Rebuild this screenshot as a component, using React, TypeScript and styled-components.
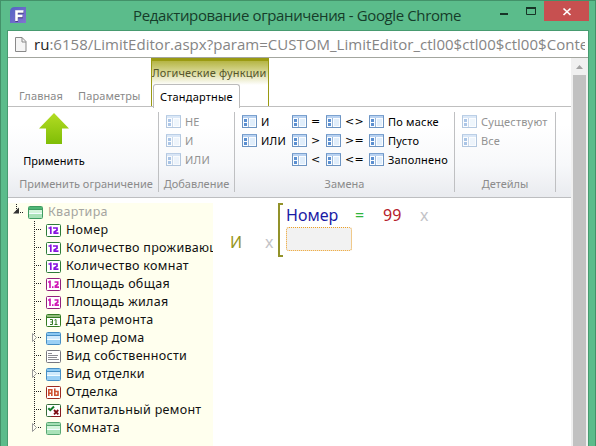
import React from "react";
import styled, { createGlobalStyle } from "styled-components";

const GlobalStyle = createGlobalStyle`
  *, *::before, *::after { box-sizing: border-box; }
  html, body { margin: 0; height: 100%; overflow: hidden; }
  #root { height: 100%; }
  body { font-family: "Noto Sans", "Open Sans", sans-serif; background: #fff; }
`;

const Window = styled.div`
  height: 446px;
  width: 596px;
  display: flex;
  flex-direction: column;
  background: #5bbc8b;
  border: 1px solid #439169;
  border-bottom: 0;
  overflow: hidden;
  white-space: nowrap;
`;

const TitleBar = styled.header`
  height: 29px;
  flex: none;
  display: flex;
  padding-right: 6px;
`;

const AppIcon = styled.svg`
  margin: 6px 0 0 9px;
  flex: none;
`;

const Title = styled.h1`
  margin: 0;
  padding-left: 107px;
  flex: 1;
  font: 400 15px/28px "Open Sans", sans-serif;
  letter-spacing: -0.38px;
  color: #163c2a;
`;

const WindowButton = styled.button<{ $w: number; $close?: boolean }>`
  display: block;
  padding: 0;
  border: 0;
  width: ${(p) => p.$w}px;
  height: 20px;
  background: ${(p) => (p.$close ? "#c75050" : "transparent")};
  svg { display: block; }
`;

const Client = styled.div`
  flex: 1;
  min-height: 0;
  margin: 0 6px;
  border: 1px solid #479b70;
  border-bottom: 0;
  background: #fff;
  display: flex;
  flex-direction: column;
`;

const AddressBar = styled.div`
  height: 27px;
  flex: none;
  display: flex;
  border-bottom: 1px solid #a3a69f;
  padding: 0 3px 0 7px;
  svg { flex: none; margin-top: 6px; }
`;

const Url = styled.div`
  margin-left: 7px;
  overflow: hidden;
  font: 400 15px/27px "Open Sans", sans-serif;
  letter-spacing: 0.03px;
  color: #858585;
  span { color: #222; }
`;

const Body = styled.div`
  flex: 1;
  min-height: 0;
  display: flex;
`;

const Page = styled.main`
  flex: 1;
  min-width: 0;
`;

const ScrollBar = styled.div`
  width: 17px;
  background: #f0f0f0;
  display: flex;
  flex-direction: column;
  padding: 0 2px;
`;

const ScrollUp = styled.svg`
  display: block;
  flex: none;
`;

const Thumb = styled.div`
  flex: 1;
  background: #c1c1c1;
`;

const TabStrip = styled.nav`
  height: 49px;
  display: flex;
  align-items: flex-end;
  border-bottom: 1px solid #bfbfbf;
`;

const Tab = styled.div<{ $pad: number; $w: number }>`
  width: ${(p) => p.$w}px;
  padding-left: ${(p) => p.$pad}px;
  font-size: 11px;
  line-height: 20px;
  letter-spacing: 0.1px;
  color: #8a8a8a;
`;

const ContextTabs = styled.div`
  width: 118px;
  height: 48px;
  border: solid #9a9a12;
  border-width: 3px 1px 0;
  background: linear-gradient(#b5b544 0, #d5d58e 10px, #fff 24px);
  display: flex;
  flex-direction: column;
  justify-content: space-between;
`;

const ContextTitle = styled.div`
  font-size: 11px;
  line-height: 23px;
  letter-spacing: 0.15px;
  color: #55552c;
`;

const ActiveTab = styled.div`
  width: 87px;
  height: 24px;
  flex: none;
  margin: 0 0 -1px 1px;
  border: 1px solid #bcbcbc;
  border-bottom: 0;
  border-radius: 3px 3px 0 0;
  background: #fff;
  padding-left: 6px;
  font-size: 11px;
  line-height: 23px;
  letter-spacing: 0.2px;
  color: #000;
`;

const Ribbon = styled.section`
  height: 91px;
  display: flex;
  padding-top: 5px;
  border-bottom: 1px solid #bdbec0;
  background: linear-gradient(#fff 20%, #f7f8fa 65%, #e9ebef);
`;

const Group = styled.div<{ $w: number }>`
  width: ${(p) => p.$w}px;
  height: 80px;
  flex: none;
  border-right: 1px solid #bfc0c2;
  display: flex;
  flex-direction: column;
`;

const GroupItems = styled.div<{ $pad: number }>`
  flex: 1;
  display: flex;
  padding-left: ${(p) => p.$pad}px;
`;

const GroupTitle = styled.div<{ $indent?: number }>`
  height: 16px;
  margin-bottom: -4px;
  padding-left: ${(p) => p.$indent ?? 0}px;
  transform: translateY(-4px);
  text-align: center;
  font-size: 11px;
  line-height: 16px;
  letter-spacing: 0;
  color: #8b8b8b;
`;

const Column = styled.div<{ $w?: number }>`
  width: ${(p) => (p.$w ? p.$w + "px" : "auto")};
`;

const CommandRow = styled.div<{ $off?: boolean }>`
  height: 19px;
  display: flex;
  align-items: center;
  gap: 4px;
  font-size: 11px;
  line-height: 19px;
  letter-spacing: 0.2px;
  color: ${(p) => (p.$off ? "#929292" : "#000")};
  svg { flex: none; opacity: ${(p) => (p.$off ? 0.5 : 1)}; }
`;

const Operator = styled.span`
  font: 400 11px/18px "DejaVu Sans", sans-serif;
`;

const ApplyButton = styled.div`
  display: flex;
  flex-direction: column;
  align-items: center;
  width: 62px;
  font-size: 11px;
  line-height: 16px;
  letter-spacing: 0.1px;
  color: #000;
  svg { margin-bottom: 9px; }
`;

const Workspace = styled.div`
  display: flex;
  padding-top: 5px;
`;

const Tree = styled.ul`
  width: 205px;
  height: 243px;
  flex: none;
  margin: 0;
  padding: 0;
  list-style: none;
  overflow: hidden;
  background: #ffffee;
`;

const TreeItem = styled.li<{ $root?: boolean }>`
  height: 18px;
  display: flex;
  align-items: center;
  gap: 5px;
  font-size: 12.5px;
  line-height: 18px;
  letter-spacing: 0.3px;
  color: ${(p) => (p.$root ? "#a5a5a0" : "#111")};
  svg { flex: none; }
`;

const Expression = styled.div`
  flex: 1;
  display: flex;
  height: 54px;
  padding-left: 17px;
  font: 400 16px/24px "Noto Sans", sans-serif;
`;

const Connective = styled.div`
  display: flex;
  align-items: flex-end;
  padding-bottom: 3px;
`;

const Token = styled.span<{ $color: string; $w: number }>`
  width: ${(p) => p.$w}px;
  flex: none;
  color: ${(p) => p.$color};
`;

const Bracket = styled.div`
  height: 54px;
  border: solid #92922a;
  border-width: 2px 0 2px 2px;
  width: 5px;
`;

const Operands = styled.div`
  height: 54px;
  padding-left: 3px;
`;

const Condition = styled.div`
  display: flex;
  height: 24px;
`;

const EmptySlot = styled.div`
  width: 66px;
  height: 24px;
  border: 1px dotted #ee9f22;
  border-radius: 3px;
  background: #f2f2f2;
`;

const FormIcon = () => (
  <svg width="15" height="13" viewBox="0 0 15 13">
    <rect x=".5" y=".5" width="14" height="12" fill="#fbfdff" stroke="#6d94c2" />
    <path d="M1 1h13v2H1z" fill="#b9d2f1" />
    <path d="M0 .5h15" stroke="#7ca2d0" />
    <path d="M6.5 3v9" stroke="#9bb9dc" />
    <path d="M2 4h3v3H2zM2 8h3v3H2z" fill="#5b8fd0" />
    <path d="M8 4h5v7H8z" fill="#e1eefb" />
  </svg>
);

const Command = ({ label, off, op }: { label: string; off?: boolean; op?: boolean }) => (
  <CommandRow $off={off}>
    <FormIcon />
    {op ? <Operator>{label}</Operator> : label}
  </CommandRow>
);

type Kind = "int" | "real" | "date" | "table" | "lines" | "text" | "bool" | "green" | "root";

const boxColors: Record<Kind, string> = {
  int: "#2d7b38", real: "#92207c", date: "#347a22", table: "#478fc5", lines: "#77777f",
  text: "#9c2a20", bool: "#356b39", green: "#58a773", root: "#3f9c62",
};

const FieldIcon = ({ kind }: { kind: Kind }) => (
  <svg width="15" height="13" viewBox="0 0 15 13">
    <rect x=".5" y=".5" width="14" height="12" rx="1" fill="#fff" stroke={boxColors[kind]} />
    {kind === "int" && (
      <path d="M2.500 4H4M4.800 2.500V10M7 4h4v2.300L8.200 8v1.200H12.500" fill="none" stroke="#8712df" strokeWidth="1.700" />
    )}
    {kind === "real" && (
      <path d="M2 4h1.500M4 2.500V10M6 9.200h1.500M8.500 4h3.200v2.300L9.400 8v1.200H13" fill="none" stroke="#d018b5" strokeWidth="1.700" />
    )}
    {kind === "date" && (
      <>
        <path d="M1 1h13v2H1z" fill="#92bd7c" />
        <path d="M0 3.500h15M4 5.500h2.500v5H4M4.500 8h2M8.500 6.200l1.500-.7v5M8.500 10.500h3" fill="none" stroke="#347a22" />
      </>
    )}
    {kind === "lines" && <path d="M2 3.500h4M2 5.500h10M2 7.500h9M2 9.500h11" stroke="#8b8b92" />}
    {kind === "text" && (
      <path d="M2.800 10V3.800h3V10M3 7.200h3M8.800 2.500v6.800H12V5.500H8.800" fill="none" stroke="#cf512f" strokeWidth="1.600" />
    )}
    {kind === "bool" && (
      <>
        <path d="M14.500 4v8.500H5" fill="none" stroke="#861b20" />
        <path d="M2.300 4.200l2 2 3.700-3.700" fill="none" stroke="#127a28" strokeWidth="2" />
        <path d="M8 6l4.300 4.300M12.300 6L8 10.300" stroke="#7d0d13" strokeWidth="1.800" />
      </>
    )}
    {(kind === "table" || kind === "green" || kind === "root") && (
      <>
        <path d="M1 1h13v2H1z" fill={kind === "table" ? "#8bc9f2" : kind === "green" ? "#a4dfb4" : "#4fb674"} />
        <path d="M1 4h13v4H1z" fill={kind === "table" ? "#d0eafc" : "#d4f4db"} />
        <path d="M1 8h13v4H1z" fill={kind === "table" ? "#9bd0f5" : "#a9e2b8"} />
        <path d="M1 3.500h13" stroke={boxColors[kind]} />
        <path d="M1 7.500h13" stroke="#f2fcff" />
      </>
    )}
  </svg>
);

const Branch = ({ expandable, last }: { expandable?: boolean; last?: boolean }) => (
  <svg width="33" height="18" viewBox="0 0 33 18">
    <path d={last ? "M26.500 0v9" : "M26.500 0v18"} stroke="#222" strokeDasharray="1 1" />
    <path d={expandable ? "M30 8.500h3" : "M28 8.500h5"} stroke="#222" strokeDasharray="1 1" />
    {expandable && <path d="M24.500 4.500v8l4-4z" fill="#fffff2" stroke="#999" />}
  </svg>
);

const fields: { kind: Kind; label: string; expandable?: boolean }[] = [
  { kind: "int", label: "Номер" },
  { kind: "int", label: "Количество проживающих" },
  { kind: "int", label: "Количество комнат" },
  { kind: "real", label: "Площадь общая" },
  { kind: "real", label: "Площадь жилая" },
  { kind: "date", label: "Дата ремонта" },
  { kind: "table", label: "Номер дома", expandable: true },
  { kind: "lines", label: "Вид собственности" },
  { kind: "table", label: "Вид отделки", expandable: true },
  { kind: "text", label: "Отделка" },
  { kind: "bool", label: "Капитальный ремонт" },
  { kind: "green", label: "Комната", expandable: true },
];

export default function App() {
  return (
    <Window>
      <GlobalStyle />
      <TitleBar>
        <AppIcon width="16" height="16" viewBox="0 0 16 16">
          <defs>
            <linearGradient id="logo" x2="1" y2="1">
              <stop stopColor="#5362c4" />
              <stop offset="1" stopColor="#8273cf" />
            </linearGradient>
          </defs>
          <path d="M5 0h11v16H0V5q0-5 5-5z" fill="url(#logo)" />
          <path d="M6 14V4.500h7M6 9.200h6" transform="translate(.7 .7)" fill="none" stroke="#38306f" strokeWidth="2.600" />
          <path d="M6.500 14V4.500h7M6.500 9h6" fill="none" stroke="#fff" strokeWidth="2.600" />
        </AppIcon>
        <Title>Редактирование ограничения - Google Chrome</Title>
        <WindowButton $w={27} aria-label="Свернуть">
          <svg width="27" height="20"><path d="M1 13h8" stroke="#173427" strokeWidth="2" /></svg>
        </WindowButton>
        <WindowButton $w={18} aria-label="Развернуть">
          <svg width="18" height="20">
            <path d="M.5 6.500h9v7h-9z" fill="none" stroke="#173427" />
            <path d="M0 7h10" stroke="#173427" strokeWidth="2" />
          </svg>
        </WindowButton>
        <WindowButton $w={45} $close aria-label="Закрыть">
          <svg width="45" height="20"><path d="M19.500 7.500l7 6.500M26.500 7.500l-7 6.500" stroke="#fff" strokeWidth="1.700" /></svg>
        </WindowButton>
      </TitleBar>
      <Client>
        <AddressBar>
          <svg width="12" height="15" viewBox="0 0 12 15">
            <path d="M.5.5h6.500l4 4v10H.5z" fill="#f5f5f5" stroke="#898989" />
            <path d="M7 .5v4.500h4" fill="none" stroke="#898989" />
          </svg>
          <Url><span>ru</span>:6158/LimitEditor.aspx?param=CUSTOM_LimitEditor_ctl00$ctl00$ctl00$ContentPlaceHolder</Url>
        </AddressBar>
        <Body>
          <Page>
            <TabStrip>
              <Tab $w={59} $pad={11}>Главная</Tab>
              <Tab $w={84} $pad={11}>Параметры</Tab>
              <ContextTabs>
                <ContextTitle>Логические функции</ContextTitle>
                <ActiveTab>Стандартные</ActiveTab>
              </ContextTabs>
            </TabStrip>
            <Ribbon>
              <Group $w={151}>
                <GroupItems $pad={15}>
                  <ApplyButton>
                    <svg width="30" height="32" viewBox="0 0 30 32">
                      <defs>
                        <linearGradient id="apply" x2="0" y2="1">
                          <stop stopColor="#b3dc23" />
                          <stop offset="1" stopColor="#7fbd06" />
                        </linearGradient>
                      </defs>
                      <path d="M15 1l15 15.500h-7V32H7V16.500H0z" fill="url(#apply)" />
                    </svg>
                    Применить
                  </ApplyButton>
                </GroupItems>
                <GroupTitle $indent={6}>Применить ограничение</GroupTitle>
              </Group>
              <Group $w={76}>
                <GroupItems $pad={7}>
                  <Column>
                    <Command off label="НЕ" />
                    <Command off label="И" />
                    <Command off label="ИЛИ" />
                  </Column>
                </GroupItems>
                <GroupTitle>Добавление</GroupTitle>
              </Group>
              <Group $w={220}>
                <GroupItems $pad={7}>
                  <Column $w={50}>
                    <Command label="И" />
                    <Command label="ИЛИ" />
                  </Column>
                  <Column $w={34}>
                    <Command op label="=" />
                    <Command op label=">" />
                    <Command op label="<" />
                  </Column>
                  <Column $w={43}>
                    <Command op label="<>" />
                    <Command op label=">=" />
                    <Command op label="<=" />
                  </Column>
                  <Column>
                    <Command label="По маске" />
                    <Command label="Пусто" />
                    <Command label="Заполнено" />
                  </Column>
                </GroupItems>
                <GroupTitle>Замена</GroupTitle>
              </Group>
              <Group $w={101}>
                <GroupItems $pad={7}>
                  <Column>
                    <Command off label="Существуют" />
                    <Command off label="Все" />
                  </Column>
                </GroupItems>
                <GroupTitle>Детейлы</GroupTitle>
              </Group>
            </Ribbon>
            <Workspace>
              <Tree>
                <TreeItem $root>
                  <svg width="15" height="18" viewBox="0 0 15 18">
                    <path d="M8.500 1v8M12 9.500h3" stroke="#222" strokeDasharray="1 1" />
                    <path d="M5 10.500h6V4.500z" fill="#333" />
                  </svg>
                  <FieldIcon kind="root" />
                  Квартира
                </TreeItem>
                {fields.map((f, i) => (
                  <TreeItem key={f.label}>
                    <Branch expandable={f.expandable} last={i === fields.length - 1} />
                    <FieldIcon kind={f.kind} />
                    {f.label}
                  </TreeItem>
                ))}
              </Tree>
              <Expression>
                <Connective>
                  <Token $color="#97971f" $w={35}>И</Token>
                  <Token $color="#c3c3c8" $w={13}>x</Token>
                </Connective>
                <Bracket />
                <Operands>
                  <Condition>
                    <Token $color="#1a1aa5" $w={69}>Номер</Token>
                    <Token $color="#30b53c" $w={28}>=</Token>
                    <Token $color="#b5202a" $w={37}>99</Token>
                    <Token $color="#c3c3c8" $w={12}>x</Token>
                  </Condition>
                  <EmptySlot />
                </Operands>
              </Expression>
            </Workspace>
          </Page>
          <ScrollBar>
            <ScrollUp width="13" height="17"><path d="M3 11h7L6.500 7z" fill="#a2a2a2" /></ScrollUp>
            <Thumb />
          </ScrollBar>
        </Body>
      </Client>
    </Window>
  );
}
